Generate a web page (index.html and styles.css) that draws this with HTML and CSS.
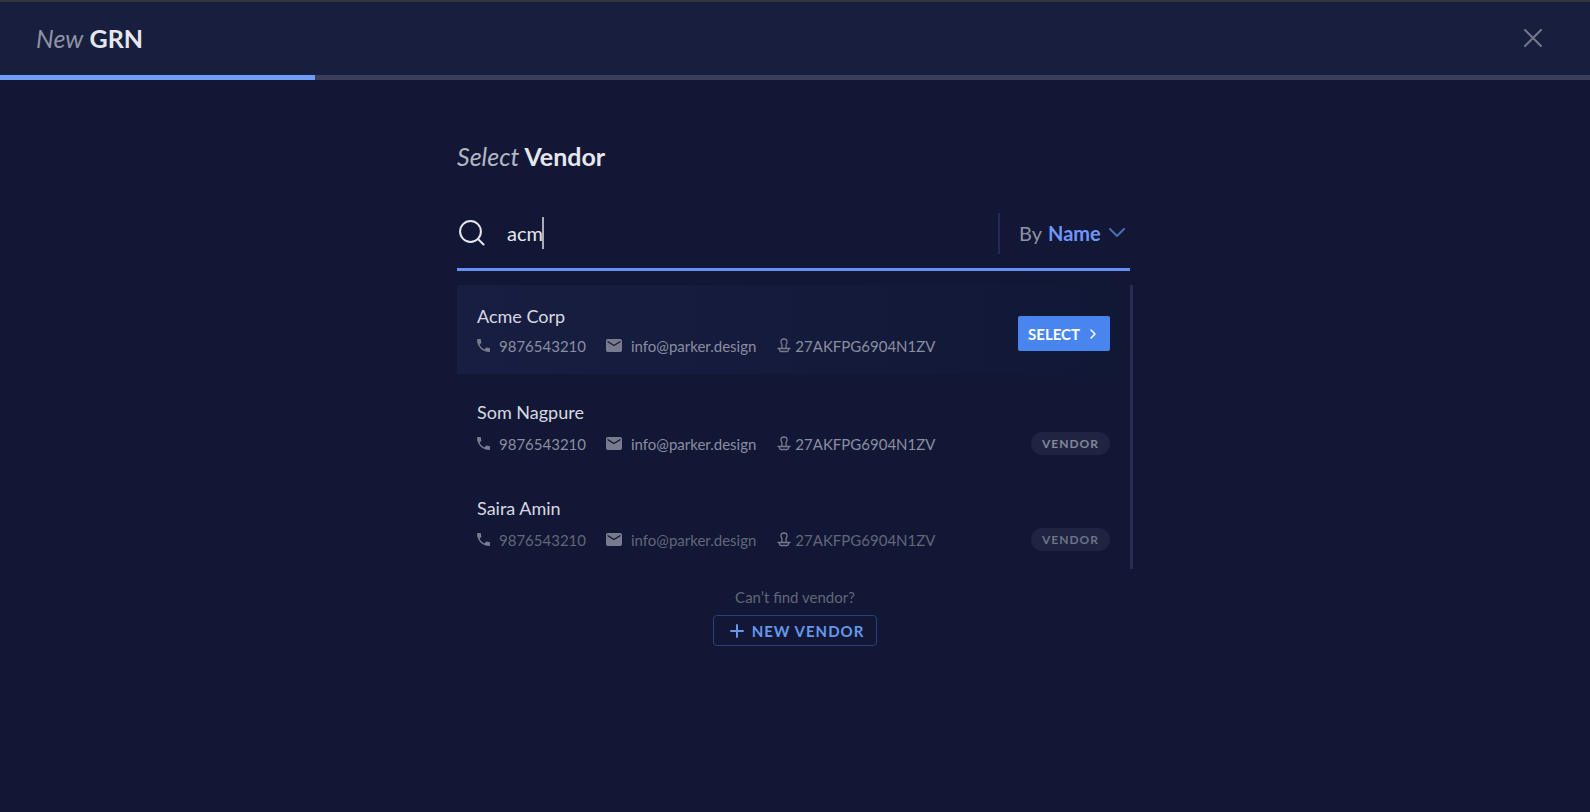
FILE: index.html
```html
<!DOCTYPE html>
<html lang="en">
<head>
<meta charset="utf-8">
<meta name="viewport" content="width=device-width, initial-scale=1">
<title>New GRN</title>
<link rel="stylesheet" href="styles.css">
</head>
<body>
<svg class="sprite" aria-hidden="true">
  <symbol id="phone" viewBox="3 3 18 18"><path fill="currentColor" d="M6.62 10.79c1.44 2.83 3.76 5.14 6.59 6.59l2.2-2.2c.27-.27.67-.36 1.02-.24 1.12.37 2.33.57 3.57.57.55 0 1 .45 1 1V20c0 .55-.45 1-1 1C10.61 21 3 13.39 3 4c0-.55.45-1 1-1h3.5c.55 0 1 .45 1 1 0 1.25.2 2.45.57 3.57.11.35.03.74-.25 1.02z"/></symbol>
  <symbol id="mail" viewBox="2 4 20 16"><path fill="currentColor" d="M20 4H4c-1.1 0-2 .9-2 2v12c0 1.1.9 2 2 2h16c1.1 0 2-.9 2-2V6c0-1.1-.9-2-2-2zm0 4-8 5-8-5V6l8 5 8-5z"/></symbol>
  <symbol id="stamp" viewBox="0 0 14 15"><path fill="none" stroke="currentColor" stroke-width="1.3" stroke-linecap="round" stroke-linejoin="round" d="M4.700 10.500 5 7 4 4.500C3.800 2 5 1 7 1s3.200 1 3 3.500L9 7l.3 3.500M1 10.500h12M2.500 10.500v1.500q0 1.500 1.300 1.500h6.400q1.300 0 1.300-1.500v-1.500"/></symbol>
</svg>

<header class="topbar">
  <h1 class="title"><em class="title-light title-muted">New</em> GRN</h1>
  <button class="close" type="button" aria-label="Close">
    <svg width="18" height="18" viewBox="0 0 18 18"><path d="M1 1l16 16M17 1 1 17"/></svg>
  </button>
</header>
<div class="progress" role="progressbar" aria-label="Progress" aria-valuemin="0" aria-valuemax="100" aria-valuenow="20"><div class="progress-fill"></div></div>

<main class="panel">
  <h2 class="title"><em class="title-light">Select</em> Vendor</h2>

  <form class="search">
    <label class="search-icon" for="query" aria-label="Search vendors">
      <svg width="26" height="26" viewBox="0 0 26 26"><circle cx="11.5" cy="11.5" r="10.4"/><path d="M19 19l5.5 5.5"/></svg>
    </label>
    <div class="search-field">
      <input id="query" class="search-input" type="text" value="acm" autocomplete="off">
      <span class="caret"></span>
    </div>
    <div class="filter">
      <label for="by">By</label>
      <select id="by" class="filter-select"><option>Name</option></select>
      <svg class="filter-arrow" width="16" height="10" viewBox="0 0 16 10"><path d="M1 1l7 7 7-7"/></svg>
    </div>
  </form>

  <ul class="results">
    <li class="row row-active">
      <div class="vendor">
        <h3 class="name">Acme Corp</h3>
        <div class="details">
          <span class="detail"><svg class="i-phone"><use href="#phone"/></svg>9876543210</span>
          <span class="detail"><svg class="i-mail"><use href="#mail"/></svg>info@parker.design</span>
          <span class="detail detail-tax"><svg class="i-stamp"><use href="#stamp"/></svg>27AKFPG6904N1ZV</span>
        </div>
      </div>
      <button class="select" type="button">SELECT
        <svg width="6" height="10" viewBox="0 0 6 10"><path d="M1 1l4 4-4 4"/></svg>
      </button>
    </li>
    <li class="row">
      <div class="vendor">
        <h3 class="name">Som Nagpure</h3>
        <div class="details">
          <span class="detail"><svg class="i-phone"><use href="#phone"/></svg>9876543210</span>
          <span class="detail"><svg class="i-mail"><use href="#mail"/></svg>info@parker.design</span>
          <span class="detail detail-tax"><svg class="i-stamp"><use href="#stamp"/></svg>27AKFPG6904N1ZV</span>
        </div>
      </div>
      <span class="badge">VENDOR</span>
    </li>
    <li class="row row-dim">
      <div class="vendor">
        <h3 class="name">Saira Amin</h3>
        <div class="details">
          <span class="detail"><svg class="i-phone"><use href="#phone"/></svg>9876543210</span>
          <span class="detail"><svg class="i-mail"><use href="#mail"/></svg>info@parker.design</span>
          <span class="detail detail-tax"><svg class="i-stamp"><use href="#stamp"/></svg>27AKFPG6904N1ZV</span>
        </div>
      </div>
      <span class="badge">VENDOR</span>
    </li>
  </ul>

  <div class="missing">
    <p class="missing-text">Can’t find vendor?</p>
    <button class="new-vendor" type="button">
      <svg width="14" height="14" viewBox="0 0 14 14"><path d="M7 1v12M1 7h12"/></svg>NEW VENDOR
    </button>
  </div>
</main>
</body>
</html>
```
FILE: styles.css
```css
* { box-sizing: border-box; }

body {
  margin: 0;
  min-height: 100vh;
  background: #111735;
  color: #e6e7ee;
  font: 15px/20px Lato, "Liberation Sans", sans-serif;
}

h1, h2, h3, p, ul { margin: 0; padding: 0; }
button, input, select { font: inherit; color: inherit; }
button { cursor: pointer; }
svg { flex: none; fill: none; stroke-linecap: round; stroke-linejoin: round; }
.sprite { position: absolute; width: 0; height: 0; }

.topbar {
  display: flex;
  align-items: center;
  justify-content: space-between;
  height: 75px;
  padding: 0 48px 2px 36px;
  border-top: 2px solid #32353c;
  background: #181e3d;
}

.title { font-size: 25px; line-height: 30px; font-weight: 700; }
.title-light { font-weight: 400; color: #b4b6c2; }
.title-muted { color: #8f92a3; }

.close {
  display: flex;
  padding: 0;
  border: 0;
  background: none;
  color: #747889;
}
.close svg { stroke: currentColor; stroke-width: 2; }

.progress { height: 5px; background: #3a3e5b; }
.progress-fill { width: 19.8%; height: 100%; background: #6d9df5; }

.panel {
  width: 100%;
  max-width: 676px;
  margin: 0 auto;
  padding-top: 61px;
}

.search {
  display: flex;
  align-items: center;
  height: 76px;
  margin: 24px 3px 0 0;
  padding-top: 3px;
  border-bottom: 3px solid #6590f5;
}
.search-icon { display: flex; padding-left: 2px; }
.search-icon svg { stroke: #e6e7ee; stroke-width: 2; }
.search-field { position: relative; flex: 1; padding-left: 22px; }
.search-input {
  display: block;
  width: 100%;
  padding: 0;
  border: 0;
  outline: 0;
  background: none;
  font-size: 20px;
  line-height: 32px;
}
.caret {
  position: absolute;
  top: 0;
  left: 57px;
  width: 2px;
  height: 100%;
  background: #a9acb8;
}

.filter {
  position: relative;
  display: flex;
  align-items: center;
  gap: 6px;
  height: 41px;
  padding: 0 5px 0 19px;
  border-left: 2px solid #1f2b55;
  color: #8f92a3;
  font-size: 20px;
}
.filter-select {
  appearance: none;
  padding: 0 24px 0 0;
  border: 0;
  background: none;
  color: #7096fb;
  font-weight: 700;
}
.filter-arrow {
  position: absolute;
  right: 5px;
  stroke: #4a6db5;
  stroke-width: 2;
  pointer-events: none;
}

.results {
  display: flex;
  flex-direction: column;
  gap: 7px;
  margin-top: 14px;
  padding-bottom: 3px;
  border-right: 3px solid #2a2e4e;
  list-style: none;
}
.row {
  display: flex;
  align-items: flex-end;
  justify-content: space-between;
  padding: 19px 20px 15px;
}
.row-active {
  padding-bottom: 18px;
  background: linear-gradient(90deg, #181e41, #111735);
}
.name { font-size: 18px; line-height: 24px; font-weight: 400; color: #d8d9e0; }
.details { display: flex; gap: 20px; margin: 10px 0 1px; color: #8a8ea0; }
.row-active .details { margin: 8px 0 0; }
.row-dim .details { color: #626679; }
.detail { display: flex; align-items: center; gap: 9px; }
.detail-tax { gap: 4px; padding-left: 1px; }
.detail svg { margin-bottom: 2px; color: #787b8e; }
.i-phone { width: 13px; height: 13px; }
.i-mail { width: 16px; height: 13px; }
.i-stamp { width: 14px; height: 15px; }

.select {
  display: flex;
  align-items: center;
  gap: 10px;
  height: 35px;
  margin-bottom: 5px;
  padding: 0 14px 0 10px;
  border: 0;
  border-radius: 2px;
  background: #4885ee;
  color: #fff;
  font-weight: 700;
}
.select svg { stroke: currentColor; stroke-width: 1.5; }

.badge {
  padding: 1px 11px;
  border-radius: 12px;
  background: #1f2442;
  color: #83879a;
  font-size: 12px;
  line-height: 21px;
  font-weight: 700;
  letter-spacing: 1px;
}
.row-dim .badge { color: #6f7386; }

.missing {
  display: flex;
  flex-direction: column;
  align-items: center;
  gap: 8px;
  margin-top: 18px;
}
.missing-text { color: #626679; }
.new-vendor {
  display: flex;
  align-items: center;
  gap: 8px;
  height: 31px;
  padding: 0 12px 0 16px;
  border: 1px solid #2b4078;
  border-radius: 4px;
  background: none;
  color: #6797ea;
  font-weight: 700;
  letter-spacing: 1px;
}
.new-vendor svg { stroke: currentColor; stroke-width: 2; }
```
